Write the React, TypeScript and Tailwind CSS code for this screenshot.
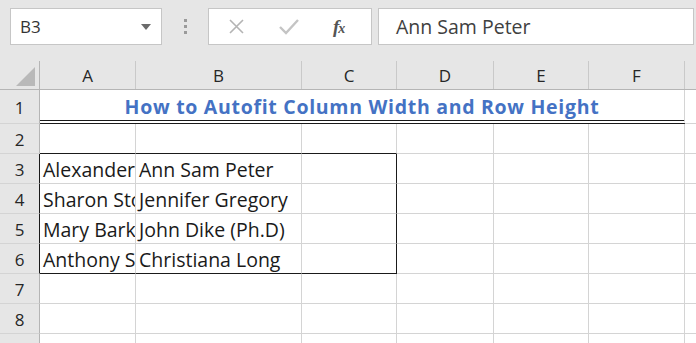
import React from 'react';

const cols = [
  { key: 'A', w: 'w-[96px]' },
  { key: 'B', w: 'w-[166px]' },
  { key: 'C', w: 'w-[95px]' },
  { key: 'D', w: 'w-[97px]' },
  { key: 'E', w: 'w-[95px]' },
  { key: 'F', w: 'w-[96px]' },
];

const people = [
  { row: 3, a: 'Alexander', b: 'Ann Sam Peter' },
  { row: 4, a: 'Sharon Stone', b: 'Jennifer Gregory' },
  { row: 5, a: 'Mary Barker', b: 'John Dike (Ph.D)' },
  { row: 6, a: 'Anthony Smith', b: 'Christiana Long' },
];

const uiFont = "font-['Open_Sans',sans-serif]";
const cellText = "font-['Open_Sans',sans-serif] text-[19.5px] text-[#1a1a1a]";

const RowHead: React.FC<{ n: number; boxed?: boolean; tall?: boolean }> = ({ n, boxed, tall }) => (
  <div
    className={`w-[40px] shrink-0 flex items-center justify-center bg-[#e6e6e6] border-b border-[#d4d4d4] border-r ${
      boxed ? 'border-r-[#1a1a1a]' : 'border-r-[#b5b5b5]'
    } ${uiFont} text-[17px] text-[#262626] pt-[2px] ${tall ? 'h-[34px]' : 'h-[30px]'}`}
  >
    {n}
  </div>
);

export default function App() {
  return (
    <div className="w-[696px] h-[343px] overflow-hidden bg-white">
      {/* formula bar */}
      <div className="h-[61px] bg-[#e6e6e6] flex items-start pt-[8px] pl-[10px] gap-[6px]">
        <div className="w-[152px] h-[37px] bg-white border border-[#c6c6c6] flex items-center justify-between pl-[9px] pr-[10px]">
          <span className={`${uiFont} text-[17px] text-[#333]`}>B3</span>
          <svg width="10" height="6" viewBox="0 0 10 6">
            <path d="M0 0 L10 0 L5 6 Z" fill="#6b6b6b" />
          </svg>
        </div>
        <div className="w-[34px] h-[37px] flex flex-col items-center justify-center gap-[3px]">
          <div className="w-[3px] h-[3px] bg-[#9a9a9a]" />
          <div className="w-[3px] h-[3px] bg-[#9a9a9a]" />
          <div className="w-[3px] h-[3px] bg-[#9a9a9a]" />
        </div>
        <div className="w-[164px] h-[37px] bg-white border border-[#c6c6c6] flex items-center pl-[19px] gap-[34px]">
          <svg width="17" height="17" viewBox="0 0 17 17">
            <path d="M2 2 L15 15 M15 2 L2 15" stroke="#b4b4b4" strokeWidth="1.6" />
          </svg>
          <svg width="20" height="17" viewBox="0 0 20 17">
            <path d="M1 9 L7 15 L19 2" stroke="#c4c4c4" strokeWidth="2.4" fill="none" />
          </svg>
          <span className="font-['Liberation_Serif',serif] italic font-bold text-[19px] text-[#555] leading-none tracking-[-1px]">
            f<span className="text-[14px]">x</span>
          </span>
        </div>
        <div className="flex-1 h-[37px] bg-white border border-[#c6c6c6] flex items-center pl-[17px] mr-[2px]">
          <span className={`${uiFont} text-[19.5px] text-[#404040]`}>Ann Sam Peter</span>
        </div>
      </div>

      {/* column headers */}
      <div className="flex h-[29px] bg-[#e6e6e6] border-b border-[#b5b5b5]">
        <div className="w-[40px] shrink-0 border-r border-[#b5b5b5] flex items-end justify-end pr-[4px] pb-[3px]">
          <svg width="19" height="19" viewBox="0 0 19 19">
            <path d="M19 0 L19 19 L0 19 Z" fill="#b9b9b9" />
          </svg>
        </div>
        {cols.map((c) => (
          <div
            key={c.key}
            className={`${c.w} shrink-0 flex items-center justify-center pt-[2px] border-r border-[#c9c9c9] ${uiFont} text-[17px] text-[#262626]`}
          >
            {c.key}
          </div>
        ))}
        <div className="flex-1" />
      </div>

      {/* row 1 */}
      <div className="flex">
        <RowHead n={1} tall />
        <div className="w-[645px] shrink-0 h-[34px] flex items-center justify-center pt-[3px] border-r border-[#d4d4d4] border-b-[4px] border-b-[#1a1a1a] border-double">
          <span className="font-['Open_Sans',sans-serif] font-bold text-[19.5px] tracking-[0.7px] text-[#4472c4]">
            How to Autofit Column Width and Row Height
          </span>
        </div>
        <div className="flex-1 h-[34px] border-b border-[#d4d4d4]" />
      </div>

      {/* row 2 */}
      <div className="flex">
        <RowHead n={2} />
        {cols.map((c, i) => (
          <div
            key={c.key}
            className={`${c.w} shrink-0 h-[30px] border-r border-b ${
              i < 3 ? 'border-b-[#1a1a1a] border-r-[#d4d4d4]' : 'border-[#d4d4d4]'
            } ${i === 2 ? 'border-r-[#1a1a1a]' : ''}`}
          />
        ))}
        <div className="flex-1 h-[30px] border-b border-[#d4d4d4]" />
      </div>

      {/* rows 3-6 */}
      {people.map((p) => (
        <div key={p.row} className="flex">
          <RowHead n={p.row} boxed />
          <div
            className={`w-[96px] shrink-0 h-[30px] border-r border-b border-r-[#d4d4d4] ${
              p.row === 6 ? 'border-b-[#1a1a1a]' : 'border-b-[#d4d4d4]'
            } overflow-hidden whitespace-nowrap flex items-center pl-[3px] pt-[3px] ${cellText}`}
          >
            {p.a}
          </div>
          <div
            className={`w-[166px] shrink-0 h-[30px] border-r border-b border-r-[#d4d4d4] ${
              p.row === 6 ? 'border-b-[#1a1a1a]' : 'border-b-[#d4d4d4]'
            } whitespace-nowrap flex items-center pl-[3px] pt-[3px] ${cellText}`}
          >
            {p.b}
          </div>
          <div
            className={`w-[95px] shrink-0 h-[30px] border-r border-b border-r-[#1a1a1a] ${
              p.row === 6 ? 'border-b-[#1a1a1a]' : 'border-b-[#d4d4d4]'
            }`}
          />
          {cols.slice(3).map((c) => (
            <div key={c.key} className={`${c.w} shrink-0 h-[30px] border-r border-b border-[#d4d4d4]`} />
          ))}
          <div className="flex-1 h-[30px] border-b border-[#d4d4d4]" />
        </div>
      ))}

      {/* rows 7-9 */}
      {[7, 8, 9].map((n) => (
        <div key={n} className="flex">
          <RowHead n={n} />
          {cols.map((c) => (
            <div key={c.key} className={`${c.w} shrink-0 h-[30px] border-r border-b border-[#d4d4d4]`} />
          ))}
          <div className="flex-1 h-[30px] border-b border-[#d4d4d4]" />
        </div>
      ))}
    </div>
  );
}
